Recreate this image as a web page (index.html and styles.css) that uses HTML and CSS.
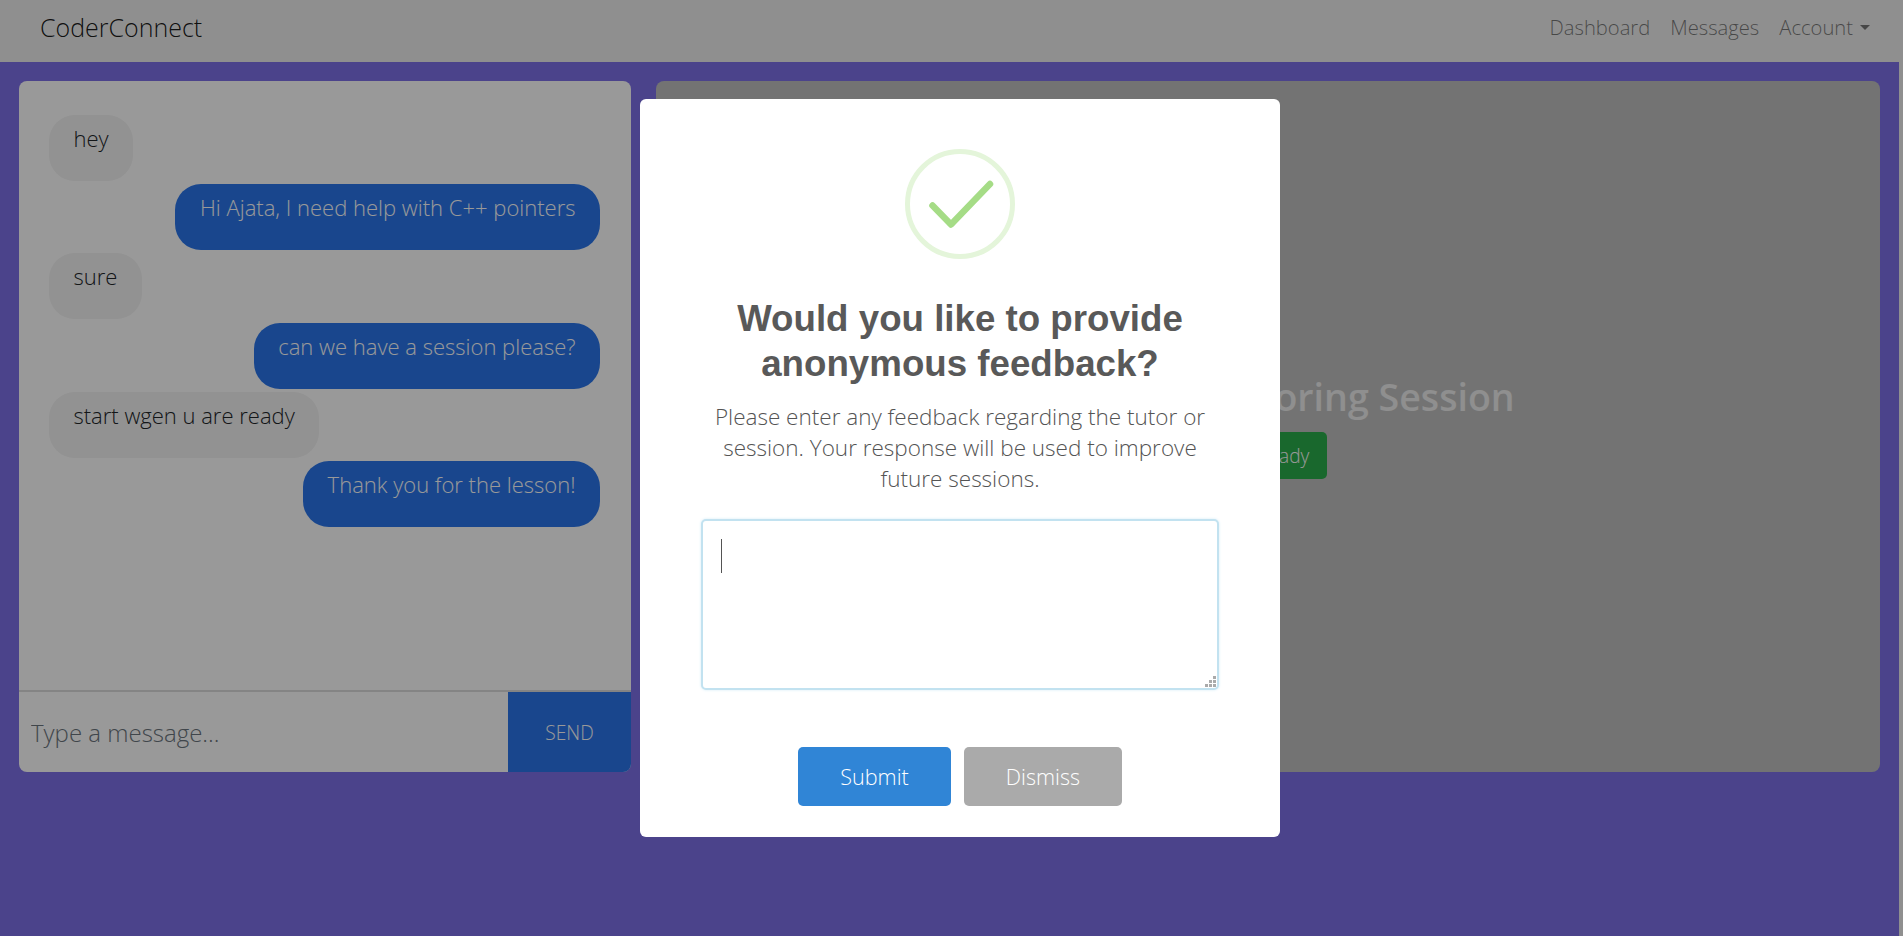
FILE: index.html
```html
<!DOCTYPE html>
<html lang="en">
<head>
<meta charset="utf-8">
<title>CoderConnect</title>
<link rel="stylesheet" href="styles.css">
</head>
<body>
<nav class="navbar">
  <a class="brand" href="#">CoderConnect</a>
  <div class="nav-links">
    <a class="nav-link" href="#">Dashboard</a>
    <a class="nav-link" href="#">Messages</a>
    <a class="nav-link dropdown" href="#">Account</a>
  </div>
</nav>
<main class="main">
  <section class="chat">
    <div class="messages">
      <div class="bubble in">hey</div>
      <div class="bubble out">Hi Ajata, I need help with C++ pointers</div>
      <div class="bubble in">sure</div>
      <div class="bubble out">can we have a session please?</div>
      <div class="bubble in">start wgen u are ready</div>
      <div class="bubble out">Thank you for the lesson!</div>
    </div>
    <form class="composer">
      <input class="composer-input" type="text" placeholder="Type a message...">
      <button class="send" type="button">SEND</button>
    </form>
  </section>
  <section class="session">
    <h2 class="session-title">Start Your Tutoring Session</h2>
    <button class="ready" type="button">I'm Ready</button>
  </section>
</main>
<div class="overlay">
  <div class="modal">
    <svg class="success-icon" width="110" height="110" viewBox="0 0 110 110" aria-hidden="true">
      <circle cx="55" cy="55" r="52.5" fill="none" stroke="#e4f5da" stroke-width="5"/>
      <path d="M27.5 56.5 L46 75.5 L85 35" fill="none" stroke="#a5dc86" stroke-width="6.5" stroke-linecap="round" stroke-linejoin="round"/>
    </svg>
    <h2 class="modal-title">Would you like to provide anonymous feedback?</h2>
    <p class="modal-text">Please enter any feedback regarding the tutor or session. Your response will be used to improve future sessions.</p>
    <div class="field">
      <textarea class="feedback"></textarea>
      <span class="caret"></span>
      <svg class="grip" width="11" height="11" viewBox="0 0 11 11" aria-hidden="true">
        <rect x="8" y="0" width="3" height="3"/>
        <rect x="4" y="4" width="3" height="3"/>
        <rect x="8" y="4" width="3" height="3"/>
        <rect x="0" y="8" width="3" height="3"/>
        <rect x="4" y="8" width="3" height="3"/>
        <rect x="8" y="8" width="3" height="3"/>
      </svg>
    </div>
    <div class="actions">
      <button class="action submit" type="button">Submit</button>
      <button class="action dismiss" type="button">Dismiss</button>
    </div>
  </div>
</div>
<div class="scroll-edge"></div>
</body>
</html>
```
FILE: styles.css
```css
* { box-sizing: border-box; }
html, body { height: 100%; }
body {
  margin: 0;
  overflow: hidden;
  background: #7d70e8;
  font-family: "Open Sans", sans-serif;
  font-weight: 300;
  font-size: 22px;
  line-height: 29px;
  color: #212529;
}
a { text-decoration: none; color: inherit; }
button, input, textarea { font-family: inherit; font-weight: 300; }

.navbar {
  height: 62px;
  display: flex;
  align-items: center;
  justify-content: space-between;
  padding: 0 33px 8px 40px;
  background: #eeeeee;
}
.brand { font-size: 25px; color: rgba(0, 0, 0, .9); }
.nav-links { display: flex; gap: 20px; font-size: 20.2px; }
.nav-link { color: rgba(0, 0, 0, .5); }
.dropdown::after {
  content: "";
  display: inline-block;
  margin-left: 7px;
  vertical-align: 5px;
  border-top: 5.76px solid;
  border-left: 5.76px solid transparent;
  border-right: 5.76px solid transparent;
}

.main {
  display: flex;
  gap: 25px;
  height: 710px;
  padding: 19px 23px 0 19px;
}
.chat {
  width: 612px;
  display: flex;
  flex-direction: column;
  background: #fff;
  border-radius: 8px;
  overflow: hidden;
}
.messages {
  flex: 1;
  display: flex;
  flex-direction: column;
  gap: 3.2px;
  padding: 34px 31px 0 30px;
}
.bubble {
  height: 66px;
  padding: 9px 24.5px 0;
  border-radius: 26px;
}
.in { align-self: flex-start; background: #f3f3f3; }
.out { align-self: flex-end; background: #2a76ec; color: #fff; }
.composer {
  height: 82px;
  display: flex;
  border-top: 2px solid #dcdcdc;
}
.composer-input {
  flex: 1;
  min-width: 0;
  border: 0;
  padding: 0 12px;
  font-size: 24px;
  background: transparent;
  outline: none;
}
.composer-input::placeholder { color: #6c757d; opacity: 1; }
.send {
  width: 123px;
  border: 0;
  background: #2a76ec;
  color: #fff;
  font-size: 19.2px;
}
.session {
  flex: 1;
  display: flex;
  flex-direction: column;
  align-items: center;
  justify-content: center;
  background: #c0c0c0;
  border-radius: 8px;
}
.session-title {
  margin: 0 0 12px;
  font-size: 37.6px;
  line-height: 46px;
  font-weight: 600;
  color: #eee;
}
.ready {
  height: 47px;
  padding: 0 18px;
  border: 0;
  border-radius: 5px;
  background: #2bae4c;
  color: #fff;
  font-size: 19.2px;
}

.overlay {
  position: fixed;
  inset: 0;
  padding: 99px 0 0 640px;
  background: rgba(0, 0, 0, .4);
}
.modal {
  width: 640px;
  height: 738px;
  display: flex;
  flex-direction: column;
  align-items: center;
  padding-top: 50px;
  background: #fff;
  border-radius: 6px;
}
.success-icon { display: block; flex: none; }
.modal-title {
  width: 520px;
  margin: 37px 0 15px;
  font-family: "Liberation Sans", Arial, sans-serif;
  font-size: 36.7px;
  line-height: 45px;
  font-weight: 700;
  text-align: center;
  color: #595959;
}
.modal-text {
  width: 520px;
  margin: 0 0 25px;
  font-size: 22.5px;
  line-height: 31px;
  text-align: center;
  color: #545454;
}
.field { position: relative; width: 518px; height: 171px; }
.feedback {
  display: block;
  width: 100%;
  height: 100%;
  padding: 12px 19px;
  border: 2px solid #c2e2f0;
  border-radius: 5px;
  box-shadow: 0 0 3px #d4ecf7;
  font-size: 21.6px;
  outline: none;
  resize: none;
}
.caret {
  position: absolute;
  left: 20px;
  top: 20px;
  width: 1px;
  height: 34px;
  background: #545454;
}
.grip {
  position: absolute;
  right: 3px;
  bottom: 3px;
  fill: #aaa;
}
.actions { display: flex; gap: 13px; margin-top: 57px; }
.action {
  height: 59px;
  border: 0;
  border-radius: 5px;
  color: #fff;
  font-size: 21.6px;
}
.submit { width: 153px; background: #3085d6; }
.dismiss { width: 158px; background: #aaa; }
.scroll-edge {
  position: fixed;
  top: 0;
  right: 0;
  bottom: 0;
  width: 4px;
  background: #8f8f8f;
}
```
